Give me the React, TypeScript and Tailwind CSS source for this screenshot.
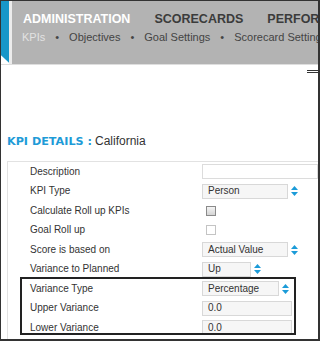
import React from "react";

const Spinner = () => (
  <svg width="7" height="10" viewBox="0 0 7 10" className="shrink-0">
    <polygon points="0,4 3.5,0 7,4" fill="#1b9bd8" />
    <polygon points="0,6 3.5,10 7,6" fill="#1b9bd8" />
  </svg>
);

const Field = ({ value, w }: { value: string; w: string }) => (
  <div
    className={`${w} h-[15px] flex items-center pl-[5px] bg-[#f6f6f6] border border-[#d8d8d8] text-[10px] text-[#333] leading-none`}
  >
    {value}
  </div>
);

type Row = { label: string; control: React.ReactNode };

const rows: Row[] = [
  {
    label: "Description",
    control: <div className="flex-1 h-[15px] bg-white border border-[#dcdcdc]" />,
  },
  {
    label: "KPI Type",
    control: (
      <div className="flex items-center gap-[3px]">
        <Field value="Person" w="w-[86px]" />
        <Spinner />
      </div>
    ),
  },
  {
    label: "Calculate Roll up KPIs",
    control: (
      <div className="ml-[4px] w-[10px] h-[10px] border border-[#8a8a8a] bg-gradient-to-b from-[#f4f4f4] to-[#d4d4d4]" />
    ),
  },
  {
    label: "Goal Roll up",
    control: <div className="ml-[4px] w-[10px] h-[10px] border border-[#c4c4c4] bg-white" />,
  },
  {
    label: "Score is based on",
    control: (
      <div className="flex items-center gap-[3px]">
        <Field value="Actual Value" w="w-[86px]" />
        <Spinner />
      </div>
    ),
  },
  {
    label: "Variance to Planned",
    control: (
      <div className="flex items-center gap-[3px]">
        <Field value="Up" w="w-[49px]" />
        <Spinner />
      </div>
    ),
  },
  {
    label: "Variance Type",
    control: (
      <div className="flex items-center gap-[3px]">
        <Field value="Percentage" w="w-[77px]" />
        <Spinner />
      </div>
    ),
  },
  { label: "Upper Variance", control: <Field value="0.0" w="w-[90px]" /> },
  { label: "Lower Variance", control: <Field value="0.0" w="w-[90px]" /> },
];

export default function App() {
  return (
    <div className="w-[320px] h-[341px] relative overflow-hidden bg-white border-l border-t border-r-2 border-b-2 border-[#333] font-['Liberation_Sans',Arial,sans-serif]">
      {/* top navigation */}
      <div className="flex h-[63px]">
        <div className="w-[8px] h-full bg-[#1897c9] [clip-path:polygon(0_0,100%_0,100%_98%,0_86%)]" />
        <div className="w-[3px] bg-[#ececec]" />
        <div className="flex-1 bg-[#b3b3b3] overflow-hidden">
          <div className="flex items-center gap-[12px] pl-[11px] pt-[11px] whitespace-nowrap text-[12.5px] font-bold leading-[15px]">
            <span className="text-white">ADMINISTRATION</span>
            <span className="w-px h-[12px] bg-[#d2d2d2]" />
            <span className="text-[#3b3b3b]">SCORECARDS</span>
            <span className="w-px h-[12px] bg-[#d2d2d2]" />
            <span className="text-[#3b3b3b]">PERFORMANCE</span>
          </div>
          <div className="flex items-center gap-[10px] pl-[10px] mt-[4px] whitespace-nowrap text-[11px] leading-[13px] text-[#444]">
            <span className="text-[#e2e2e2]">KPIs</span>
            <span>•</span>
            <span>Objectives</span>
            <span>•</span>
            <span>Goal Settings</span>
            <span>•</span>
            <span>Scorecard Settings</span>
          </div>
        </div>
      </div>
      <div className="h-px bg-[#dedede]" />

      {/* small menu glyph */}
      <div className="flex justify-end mt-[5px]">
        <div className="w-[11px] flex flex-col gap-[1px]">
          <div className="h-px bg-[#333]" />
          <div className="h-px bg-[#333]" />
        </div>
      </div>

      {/* title */}
      <div className="mt-[61px] pl-[6px] flex items-baseline leading-[14px]">
        <span className="font-['DejaVu_Sans',Verdana,sans-serif] font-bold text-[11.2px] text-[#1e9bd7]">
          KPI DETAILS :
        </span>
        <span className="ml-[3px] text-[12px] text-[#333]">California</span>
      </div>

      {/* form */}
      <div className="mt-[12px] ml-[6px] border-l border-t border-[#e2e2e2] pb-[4px]">
        {rows.map((r) => (
          <div key={r.label} className="flex items-center h-[19.5px]">
            <div className="w-[194px] shrink-0 pl-[22px] text-[10px] text-[#333] leading-none">
              {r.label}
            </div>
            <div className="flex-1 flex items-center">{r.control}</div>
          </div>
        ))}
      </div>

      {/* highlight annotation */}
      <div className="absolute left-[19px] top-[276px] w-[276px] h-[58px] border-2 border-[#222]" />
    </div>
  );
}
